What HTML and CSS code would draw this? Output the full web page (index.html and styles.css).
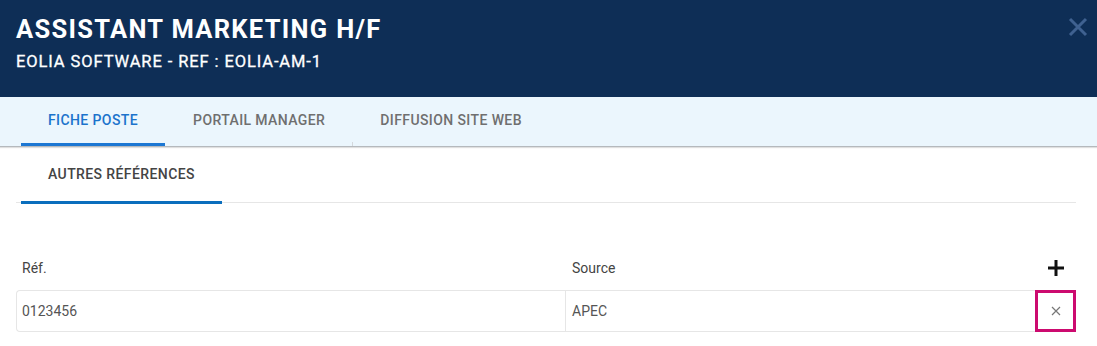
FILE: index.html
```html
<!DOCTYPE html>
<html lang="fr">
<head>
    <meta charset="UTF-8">
    <title>Assistant Marketing H/F</title>
    <link rel="stylesheet" href="styles.css">
</head>
<body>
    <div class="header">
        <div class="titles">
            <h1>ASSISTANT MARKETING H/F</h1>
            <div class="subtitle">EOLIA SOFTWARE - REF : EOLIA-AM-1</div>
        </div>
        <button class="close" title="Fermer">
            <svg width="20" height="20" viewBox="0 0 20 20"><path d="M2 2 L18 18 M18 2 L2 18" stroke="#3f6190" stroke-width="3" fill="none"/></svg>
        </button>
    </div>

    <div class="tabs">
        <div class="tab active">FICHE POSTE</div>
        <div class="tab">PORTAIL MANAGER</div>
        <div class="tab sep">DIFFUSION SITE WEB</div>
    </div>

    <div class="content">
        <div class="subtabs">
            <div class="subtab active">AUTRES RÉFÉRENCES</div>
        </div>

        <div class="refs">
            <div class="refs-head">
                <div class="col-ref">Réf.</div>
                <div class="col-src">Source</div>
                <div class="col-act">
                    <button class="add" title="Ajouter">
                        <svg width="18" height="18" viewBox="0 0 18 18"><path d="M9 1 V17 M1 9 H17" stroke="#111" stroke-width="3" fill="none"/></svg>
                    </button>
                </div>
            </div>
            <div class="refs-row">
                <div class="cell cell-ref">0123456</div>
                <div class="cell cell-src">APEC</div>
                <div class="cell cell-act">
                    <svg width="10" height="10" viewBox="0 0 10 10"><path d="M1 1 L9 9 M9 1 L1 9" stroke="#777" stroke-width="1.2" fill="none"/></svg>
                </div>
            </div>
        </div>
    </div>
</body>
</html>
```

FILE: styles.css
```css
body {
    margin: 0;
    font-family: Roboto, "Liberation Sans", Arial, sans-serif;
    background: #fff;
    color: #444;
}
.header {
    background-color: #0e2e56;
    height: 97px;
    box-sizing: border-box;
    padding: 13px 9px 0 16px;
    display: flex;
    justify-content: space-between;
    align-items: flex-start;
}
.header h1 {
    margin: 0;
    color: #fff;
    font-size: 25.5px;
    font-weight: 700;
    letter-spacing: 1.3px;
    line-height: 33px;
}
.subtitle {
    color: #fff;
    font-size: 16.5px;
    font-weight: 400;
    letter-spacing: 0.9px;
    margin-top: 6px;
    -webkit-text-stroke: 0.3px #fff;
}
.close {
    background: none;
    border: none;
    padding: 0;
    margin-top: 4px;
    cursor: pointer;
}
.tabs {
    display: flex;
    background-color: #ebf6fd;
    height: 49px;
    padding-left: 21px;
    border-bottom: 1px solid #b5b9bd;
    box-shadow: 0 1px 1px rgba(0,0,0,0.12);
}
.tab {
    padding: 0 27px 0 28px;
    font-size: 14px;
    font-weight: 500;
    letter-spacing: 0.4px;
    color: #6f6f6f;
    line-height: 46px;
    border-bottom: 3px solid transparent;
    position: relative;
}
.tab.active {
    color: #1b73cc;
    border-bottom-color: #1c77d3;
    padding: 0 27px;
}
.tab.sep::before {
    content: "";
    position: absolute;
    left: 0;
    bottom: -3px;
    height: 4px;
    border-left: 1px solid #d4d8dc;
}
.content {
    padding: 0 21px 0 16px;
}
.subtabs {
    display: flex;
    height: 55px;
    border-bottom: 1px solid #e6e6e6;
}
.subtab {
    margin-left: 5px;
    padding: 0 27px;
    font-size: 14px;
    font-weight: 500;
    letter-spacing: 0.4px;
    color: #444;
    line-height: 55px;
}
.subtab.active {
    border-bottom: 3px solid #0a6ebd;
    margin-bottom: -2px;
    line-height: 54px;
}
.refs {
    margin-top: 51px;
}
.refs-head, .refs-row {
    display: grid;
    grid-template-columns: 549px 470px 41px;
}
.refs-head {
    font-size: 14px;
    font-weight: 400;
    color: #444;
    height: 36px;
    padding-bottom: 8px;
    box-sizing: border-box;
    align-items: center;
}
.col-ref {
    padding-left: 6px;
}
.col-src {
    padding-left: 7px;
}
.col-act {
    display: flex;
    justify-content: center;
}
.add {
    background: none;
    border: none;
    padding: 0;
    cursor: pointer;
    display: flex;
}
.refs-row {
    height: 42px;
}
.cell {
    border-top: 1px solid #e6e6e6;
    border-bottom: 1px solid #e6e6e6;
    display: flex;
    align-items: center;
    font-size: 14px;
    color: #555;
}
.cell-ref {
    border-left: 1px solid #e6e6e6;
    border-radius: 4px 0 0 4px;
    padding-left: 5px;
}
.cell-src {
    border-left: 1px solid #e6e6e6;
    padding-left: 6px;
}
.cell-act {
    border: 3px solid #cc0a6f;
    justify-content: center;
    box-sizing: border-box;
}
```
